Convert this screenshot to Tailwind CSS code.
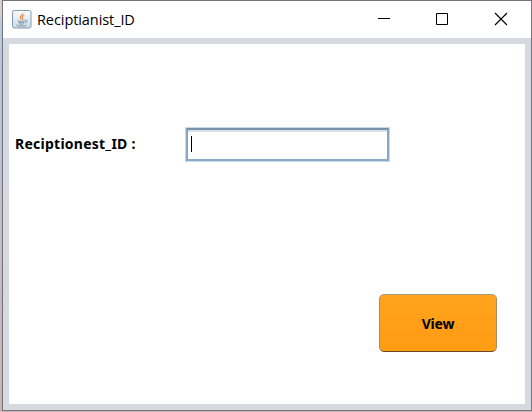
<!DOCTYPE html>
<html lang="en">
<head>
<meta charset="utf-8">
<title>Reciptianist_ID</title>
<script src="https://cdn.jsdelivr.net/npm/@tailwindcss/browser@4"></script>
</head>
<body class="w-[532px] h-[412px] overflow-hidden pl-[2px] pb-px bg-linear-to-b from-[#d8cfcc] from-3% via-[#b4cbe0] via-6% to-[#cbb2b4]">
<main class="flex flex-col w-[530px] h-[411px] border border-[#777579] border-l-[#74717a] bg-[#d6d9e0]">
  <header class="flex shrink-0 h-[37px] items-center bg-white pl-[9px] pr-px">
    <svg class="size-5 shrink-0" viewBox="0 0 20 20" fill="none">
      <defs><linearGradient id="tile" x1="0" y1="0" x2="0" y2="1"><stop stop-color="#fbfcfd"/><stop offset="1" stop-color="#cbdbe5"/></linearGradient></defs>
      <rect x=".5" y=".5" width="18.5" height="17.5" rx="1.7" fill="url(#tile)" stroke="#829bb0"/>
      <path d="M10.6 3.2c1 2-3.7 2.7-2.2 5.2l.8 1.1M12.2 5.5c-2.7 1-2.3 2-1.5 2.8.5.6 0 1.1-.4 1.4" stroke="#e48b48" stroke-width="1.1"/>
      <path d="M5.8 10.5c-.7 1 6.6 1 7.3 0M6.3 12.1c1.4.9 4.8.8 6.1.2M7 13.7c1.2.7 3.5.6 4.7.1M13.2 10.4c3-.7 2.3 2.2-.2 2.5M4.6 14.8c-1.3 1.5 8.8 1.8 9.8.3" stroke="#718ca6" stroke-width=".9"/>
    </svg>
    <h1 class="ml-[5px] w-[110px] font-['Open_Sans',sans-serif] text-[14.5px] leading-5 tracking-[-0.08px] text-black">Reciptianist_ID</h1>
    <div class="ml-auto flex items-center">
      <svg class="w-[58px] h-[37px]" viewBox="0 0 58 37"><path d="M10 17.5h12" stroke="#000"/></svg>
      <svg class="w-[58px] h-[37px]" viewBox="0 0 58 37" fill="none"><path d="M10.5 12.5h11v11h-11z" stroke="#000"/></svg>
      <svg class="w-[46px] h-[37px]" viewBox="0 0 46 37" fill="none"><path d="M11 12l12 12M23 12L11 24" stroke="#000" stroke-width="1.15"/></svg>
    </div>
  </header>
  <section class="flex flex-col w-[516px] h-[360px] mt-[6px] ml-[6px] bg-white">
    <div class="flex mt-[83px] ml-[6px] h-[35px]">
      <label for="rid" class="w-[170px] pt-[7px] font-['Noto_Sans','Open_Sans',sans-serif] text-[14px] leading-5 font-bold tracking-[0.25px] text-black">Reciptionest_ID :</label>
      <div id="rid" class="w-[205px] h-[35px] border border-[#c3dced] bg-white">
        <div class="h-full border-2 border-[#8aa5be] border-t-[#7892ac] border-b-[#8ca9c5] shadow-[inset_0_2px_0_#dcdfe5] pl-[3px] pt-[6px]">
          <div class="w-px h-4 bg-black"></div>
        </div>
      </div>
    </div>
    <button class="mt-[132px] ml-[370px] w-[118px] h-[58px] rounded-[5px] border border-[#a78e65] border-t-[#a59c7c] border-b-[#68492a] bg-linear-to-b from-[#ffa31c] to-[#ff9c12] font-['Noto_Sans','Open_Sans',sans-serif] text-[14px] leading-5 pt-px font-bold tracking-[-0.2px] text-black">View</button>
  </section>
</main>
</body>
</html>
